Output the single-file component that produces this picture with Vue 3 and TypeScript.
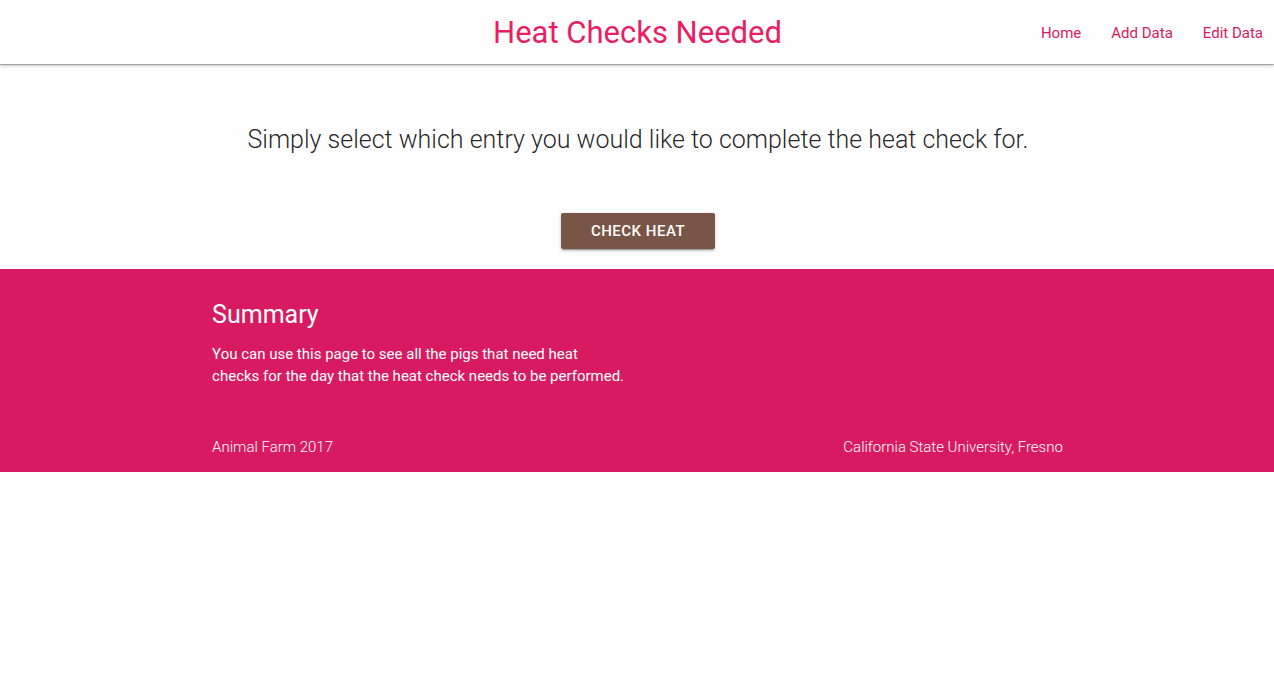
<script setup lang="ts">
interface NavLink {
  label: string
  href: string
}

const links: NavLink[] = [
  { label: 'Home', href: '#home' },
  { label: 'Add Data', href: '#add' },
  { label: 'Edit Data', href: '#edit' },
]
</script>

<template>
  <div class="page">
    <header class="nav">
      <h1 class="brand">Heat Checks Needed</h1>
      <nav class="links">
        <a v-for="link in links" :key="link.label" :href="link.href">{{ link.label }}</a>
      </nav>
    </header>

    <main class="main">
      <p class="lead">Simply select which entry you would like to complete the heat check for.</p>
      <button type="button" class="check">Check Heat</button>
    </main>

    <footer class="footer">
      <div class="container">
        <section class="summary">
          <h2>Summary</h2>
          <p>You can use this page to see all the pigs that need heat checks for the day that the heat check needs to be performed.</p>
        </section>
        <div class="copyright">
          <span>Animal Farm 2017</span>
          <a href="#university">California State University, Fresno</a>
        </div>
      </div>
    </footer>
  </div>
</template>

<style>
body {
  margin: 0;
  background: #fefefe;
}
</style>

<style scoped>
.page {
  font-family: Roboto, sans-serif;
  font-size: 15px;
  line-height: 22px;
}

.nav {
  display: grid;
  grid-template-columns: 1fr auto 1fr;
  align-items: center;
  height: 64px;
  padding-left: 1px;
  background: #fefefe;
  box-shadow: 0 1px 0 0 rgba(0, 0, 0, 0.2), 0 2px 2px 0 rgba(0, 0, 0, 0.14), 0 1px 5px 0 rgba(0, 0, 0, 0.12);
}

.brand {
  grid-column: 2;
  margin: 0;
  font-size: 31px;
  font-weight: 400;
  line-height: 66px;
  color: #e91e63;
}

.links {
  display: flex;
  justify-content: flex-end;
  gap: 30px;
  padding-right: 11px;
}

.links a {
  color: #d81b60;
  text-decoration: none;
}

.main {
  display: flex;
  flex-direction: column;
  align-items: center;
  padding: 58px 19px 20px 21px;
}

.lead {
  margin: 0 0 55px;
  font-size: 25px;
  font-weight: 300;
  line-height: 36px;
  text-align: center;
  color: rgba(0, 0, 0, 0.87);
}

.check {
  height: 36px;
  padding: 0 30px;
  border: 0;
  border-radius: 2px;
  background: #795548;
  color: #fff;
  font-family: inherit;
  font-size: 15px;
  font-weight: 500;
  line-height: 36px;
  text-transform: uppercase;
  letter-spacing: 0.5px;
  cursor: pointer;
  box-shadow: 0 2px 2px 0 rgba(0, 0, 0, 0.14), 0 1px 5px 0 rgba(0, 0, 0, 0.12), 0 3px 1px -2px rgba(0, 0, 0, 0.2);
}

.footer {
  padding-top: 20px;
  background: #d81b60;
  color: #fff;
}

.container {
  box-sizing: border-box;
  width: 70%;
  margin: 0 auto;
  padding: 0 20px 0 21px;
}

.summary {
  box-sizing: border-box;
  width: 50%;
  padding: 0 12px 35px 0;
}

.summary h2 {
  margin: 0;
  padding: 10px 0 12px;
  font-size: 25px;
  font-weight: 400;
  line-height: 32px;
}

.summary p {
  margin: 0;
  font-weight: 400;
}

.copyright {
  display: flex;
  justify-content: space-between;
  align-items: center;
  height: 50px;
  font-weight: 300;
}

.copyright a {
  color: #fff;
  text-decoration: none;
}
</style>
